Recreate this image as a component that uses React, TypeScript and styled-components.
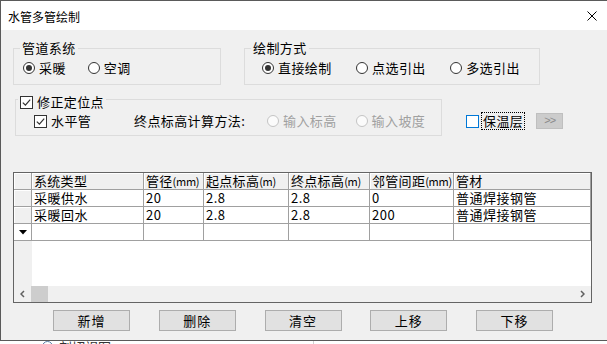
import { Fragment } from 'react'
import styled, { createGlobalStyle } from 'styled-components'

const GlobalStyle = createGlobalStyle`
  html, body { margin: 0; padding: 0; background: #fff; overflow: hidden; }
  body {
    font-family: "Noto Sans CJK SC", "Noto Sans", sans-serif;
    font-size: 13px;
    color: #000;
  }
  * { box-sizing: border-box; }
`

const Window = styled.div`
  width: 607px;
  border-top: 1px solid #5a5a5a;
  border-left: 1px solid #5a5a5a;
  border-bottom: 1px solid #5a5a5a;
  background: #f0f0f0;
`

const TitleBar = styled.div`
  height: 29px;
  background: #fff;
  display: flex;
  align-items: center;
  justify-content: space-between;
  padding: 1px 10px 0 7px;
  font-size: 12px;
`

const Body = styled.div`
  height: 310px;
  padding: 18px 0 0 12px;
`

const Row = styled.div<{ $gap?: number; $top?: number; $left?: number }>`
  display: flex;
  align-items: flex-start;
  gap: ${p => p.$gap ?? 0}px;
  margin-top: ${p => p.$top ?? 0}px;
  padding-left: ${p => p.$left ?? 0}px;
`

const GroupBox = styled.div<{ $w: number }>`
  position: relative;
  width: ${p => p.$w}px;
  height: 37px;
  border: 1px solid #dcdcdc;
`

const Legend = styled.div<{ $top: number; $left: number }>`
  position: absolute;
  top: ${p => p.$top}px;
  left: ${p => p.$left}px;
  padding: 0 2px;
  background: #f0f0f0;
  display: flex;
  align-items: center;
  gap: 4px;
  height: 16px;
`

const GroupContent = styled.div<{ $left: number; $top: number; $gap?: number }>`
  height: 100%;
  display: flex;
  align-items: center;
  gap: ${p => p.$gap ?? 0}px;
  padding: ${p => p.$top}px 0 0 ${p => p.$left}px;
`

const Text = styled.span<{ $dim?: boolean; $w?: number }>`
  font-size: 13px;
  letter-spacing: 0.4px;
  line-height: 16px;
  white-space: nowrap;
  color: ${p => (p.$dim ? '#a0a0a0' : '#000')};
  ${p => (p.$w ? `width: ${p.$w}px; flex: none;` : '')}
`

const Option = styled.label<{ $ml?: number }>`
  display: flex;
  align-items: center;
  gap: 4px;
  margin-left: ${p => p.$ml ?? 0}px;
`

const RadioDot = styled.span<{ $on?: boolean; $dim?: boolean }>`
  position: relative;
  width: 12px;
  height: 12px;
  flex: none;
  border-radius: 50%;
  border: 1px solid ${p => (p.$dim ? '#c4c4c4' : '#333')};
  background: ${p => (p.$dim ? '#fbfbfb' : '#fff')};
  &::after {
    content: '';
    display: ${p => (p.$on ? 'block' : 'none')};
    position: absolute;
    left: 2px;
    top: 2px;
    width: 6px;
    height: 6px;
    border-radius: 50%;
    background: #333;
  }
`

const CheckBox = styled.span<{ $focus?: boolean }>`
  width: 13px;
  height: 13px;
  flex: none;
  display: flex;
  align-items: center;
  justify-content: center;
  border: 1px solid ${p => (p.$focus ? '#0078d7' : '#333')};
  background: #fff;
`

const FocusText = styled(Text)`
  border: 1px dotted #000;
  padding: 0 1px;
  margin-left: -2px;
`

const MoreButton = styled.div`
  width: 27px;
  height: 16px;
  margin-left: 11px;
  background: #cccccc;
  border: 1px solid #bfbfbf;
  color: #8a8a8a;
  font-family: "Liberation Sans", sans-serif;
  font-size: 11px;
  line-height: 13px;
  text-align: center;
  letter-spacing: -1px;
`

const Aside = styled.div`
  display: flex;
  align-items: center;
  margin: 13px 0 0 24px;
`

const TableFrame = styled.div`
  margin-top: 36px;
  width: 579px;
  height: 131px;
  border: 1px solid #646464;
  background: #fff;
  display: flex;
  flex-direction: column;
`

const Grid = styled.div`
  display: grid;
  grid-template-columns: 18px 112px 60px 85px 81px 84px 137px;
  grid-auto-rows: 17px;
`

const HeadCell = styled.div`
  background: #f0f0f0;
  border-right: 1px solid #a0a0a0;
  border-bottom: 1px solid #a0a0a0;
  box-shadow: inset 1px 1px 0 #fff;
  padding-left: 2px;
  font-size: 13px;
  letter-spacing: 0.3px;
  line-height: 16px;
  white-space: nowrap;
`

const Unit = styled.span`
  font-size: 11px;
  letter-spacing: -0.3px;
`

const RowHead = styled.div<{ $current?: boolean }>`
  background: ${p => (p.$current ? '#fff' : '#f0f0f0')};
  border-right: 1px solid #a0a0a0;
  border-bottom: 1px solid #a0a0a0;
  box-shadow: inset 1px 1px 0 #fff;
  display: flex;
  align-items: center;
  justify-content: center;
`

const Cell = styled.div`
  background: #fff;
  border-right: 1px solid #a0a0a0;
  border-bottom: 1px solid #a0a0a0;
  padding-left: 2px;
  font-size: 13px;
  letter-spacing: 0.5px;
  line-height: 16px;
  white-space: nowrap;
`

const Filler = styled.div`
  flex: 1;
  display: flex;
  &::before {
    content: '';
    width: 18px;
    background: #f0f0f0;
  }
`

const HScroll = styled.div`
  height: 16px;
  display: flex;
  background: #f0f0f0;
`

const ScrollArrow = styled.div`
  width: 17px;
  display: flex;
  align-items: center;
  justify-content: center;
`

const Thumb = styled.div`
  width: 17px;
  background: #cdcdcd;
`

const Track = styled.div`
  flex: 1;
`

const ButtonRow = styled.div`
  display: flex;
  gap: 28.75px;
  margin-top: 7px;
  padding-left: 40px;
`

const Button = styled.div`
  width: 77px;
  height: 21px;
  background: #e1e1e1;
  border: 1px solid #adadad;
  display: flex;
  align-items: center;
  justify-content: center;
  font-size: 13px;
  letter-spacing: 1px;
`

const Strip = styled.div`
  height: 3px;
  overflow: hidden;
  display: flex;
  align-items: flex-start;
  background: #fff;
`

const StripIcon = styled.span`
  width: 11px;
  height: 11px;
  margin: 0 6px 0 42px;
  border: 1px solid #5b7fa6;
  border-radius: 50%;
`

const StripText = styled.span`
  font-size: 13px;
  line-height: 12px;
  color: #333;
  width: 254px;
`

const StripDivider = styled.span`
  width: 1px;
  height: 3px;
  background: #d0d0d0;
`

const Tick = () => (
  <svg width="9" height="9" viewBox="0 0 9 9">
    <polyline points="0.8,4.6 3.4,7.2 8.2,1.6" fill="none" stroke="#333" strokeWidth="1.2" />
  </svg>
)

const Chevron = ({ right }: { right?: boolean }) => (
  <svg width="5" height="8" viewBox="0 0 5 8">
    <polyline
      points={right ? '1,1 4,4 1,7' : '4,1 1,4 4,7'}
      fill="none"
      stroke="#606060"
      strokeWidth="1.5"
    />
  </svg>
)

const columns = [
  { name: '系统类型', unit: '' },
  { name: '管径', unit: '(mm)' },
  { name: '起点标高', unit: '(m)' },
  { name: '终点标高', unit: '(m)' },
  { name: '邻管间距', unit: '(mm)' },
  { name: '管材', unit: '' },
]

const rows = [
  ['采暖供水', '20', '2.8', '2.8', '0', '普通焊接钢管'],
  ['采暖回水', '20', '2.8', '2.8', '200', '普通焊接钢管'],
]

const buttons = ['新增', '删除', '清空', '上移', '下移']

export default function App() {
  return (
    <>
      <GlobalStyle />
      <Window>
        <TitleBar>
          <span>水管多管绘制</span>
          <svg width="10" height="10" viewBox="0 0 10 10">
            <path d="M0.5 0.5 L9.5 9.5 M9.5 0.5 L0.5 9.5" stroke="#000" strokeWidth="1" />
          </svg>
        </TitleBar>
        <Body>
          <Row $gap={23}>
            <GroupBox $w={208}>
              <Legend $top={-9} $left={6}>
                <Text>管道系统</Text>
              </Legend>
              <GroupContent $left={9} $top={2} $gap={22}>
                <Option>
                  <RadioDot $on />
                  <Text>采暖</Text>
                </Option>
                <Option>
                  <RadioDot />
                  <Text>空调</Text>
                </Option>
              </GroupContent>
            </GroupBox>
            <GroupBox $w={296}>
              <Legend $top={-9} $left={6}>
                <Text>绘制方式</Text>
              </Legend>
              <GroupContent $left={17} $top={2} $gap={24.5}>
                <Option>
                  <RadioDot $on />
                  <Text>直接绘制</Text>
                </Option>
                <Option>
                  <RadioDot />
                  <Text>点选引出</Text>
                </Option>
                <Option>
                  <RadioDot />
                  <Text>多选引出</Text>
                </Option>
              </GroupContent>
            </GroupBox>
          </Row>

          <Row $top={14} $left={2}>
            <GroupBox $w={427}>
              <Legend $top={-6} $left={2}>
                <CheckBox>
                  <Tick />
                </CheckBox>
                <Text>修正定位点</Text>
              </Legend>
              <GroupContent $left={18} $top={7}>
                <Option>
                  <CheckBox>
                    <Tick />
                  </CheckBox>
                  <Text $w={83}>水平管</Text>
                </Option>
                <Text $w={133}>终点标高计算方法:</Text>
                <Option>
                  <RadioDot $dim />
                  <Text $dim>输入标高</Text>
                </Option>
                <Option $ml={19}>
                  <RadioDot $dim />
                  <Text $dim>输入坡度</Text>
                </Option>
              </GroupContent>
            </GroupBox>
            <Aside>
              <Option>
                <CheckBox $focus />
                <FocusText>保温层</FocusText>
              </Option>
              <MoreButton>&gt;&gt;</MoreButton>
            </Aside>
          </Row>

          <TableFrame>
            <Grid>
              <HeadCell />
              {columns.map(c => (
                <HeadCell key={c.name}>
                  {c.name}
                  {c.unit && <Unit>{c.unit}</Unit>}
                </HeadCell>
              ))}
              {rows.map((r, i) => (
                <Fragment key={i}>
                  <RowHead />
                  {r.map((v, j) => (
                    <Cell key={j}>{v}</Cell>
                  ))}
                </Fragment>
              ))}
              <RowHead $current>
                <svg width="8" height="5" viewBox="0 0 8 5">
                  <polygon points="0,0 8,0 4,4.5" fill="#000" />
                </svg>
              </RowHead>
              {columns.map(c => (
                <Cell key={'new-' + c.name} />
              ))}
            </Grid>
            <Filler />
            <HScroll>
              <ScrollArrow>
                <Chevron />
              </ScrollArrow>
              <Thumb />
              <Track />
              <ScrollArrow>
                <Chevron right />
              </ScrollArrow>
            </HScroll>
          </TableFrame>

          <ButtonRow>
            {buttons.map(b => (
              <Button key={b}>{b}</Button>
            ))}
          </ButtonRow>
        </Body>
      </Window>
      <Strip>
        <StripIcon />
        <StripText>剖切视图</StripText>
        <StripDivider />
      </Strip>
    </>
  )
}
